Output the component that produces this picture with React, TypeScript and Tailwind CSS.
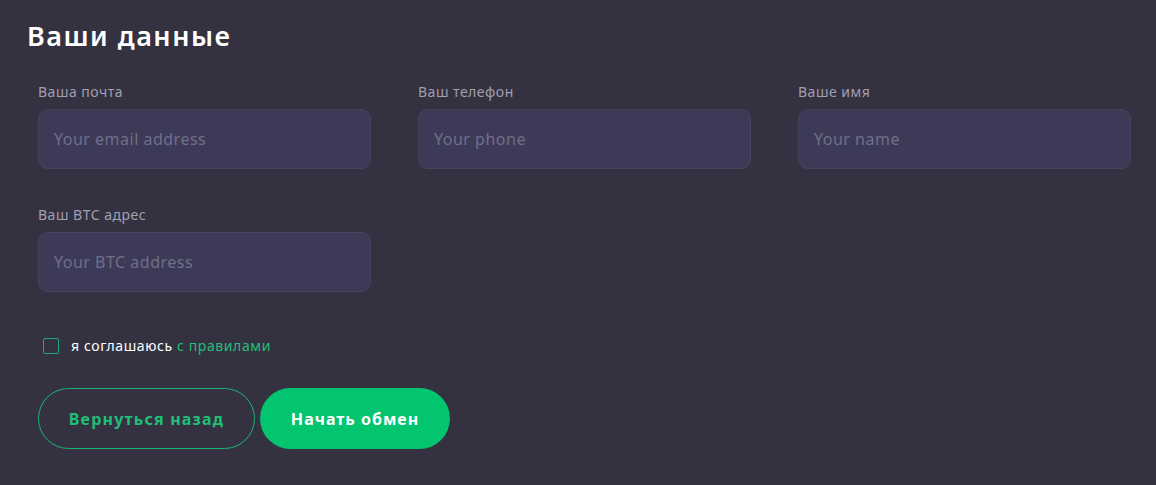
import React, { useState } from 'react';

const fields = [
  { label: 'Ваша почта', placeholder: 'Your email address' },
  { label: 'Ваш телефон', placeholder: 'Your phone' },
  { label: 'Ваше имя', placeholder: 'Your name' },
  { label: 'Ваш BTC адрес', placeholder: 'Your BTC address' },
];

/**
 * Single labelled input
 */
const Field: React.FC<{ label: string; placeholder: string }> = ({ label, placeholder }) => (
  <div className="flex flex-col">
    <label className="text-[14px] leading-[18px] tracking-[0.5px] text-[#a19fb0] mb-[8px] h-[18px]">{label}</label>
    <input
      placeholder={placeholder}
      className="h-[60px] w-[333px] rounded-[10px] bg-[#3d3a58] border border-[#47445f] px-[15px] text-[16px] tracking-[0.5px] text-white placeholder:text-[#716e88] outline-none"
    />
  </div>
);

const App: React.FC = () => {
  const [agree, setAgree] = useState(false);

  return (
    <div
      className="min-h-[485px] w-full bg-[#343241] pl-[27px] pt-[18px]"
      style={{ fontFamily: '"Noto Sans", "Open Sans", sans-serif' }}
    >
      <h2 className="text-[27px] leading-[36px] font-semibold tracking-[1.5px] text-white">Ваши данные</h2>

      <div className="pl-[11px] mt-[29px]">
        <div className="grid grid-cols-[333px_333px_333px] gap-x-[47px] gap-y-[37px]">
          {fields.map((f) => (
            <Field key={f.label} label={f.label} placeholder={f.placeholder} />
          ))}
        </div>

        <label className="flex items-center mt-[43px] ml-[5px] cursor-pointer">
          <input
            type="checkbox"
            checked={agree}
            onChange={() => setAgree(!agree)}
            className="appearance-none w-[16px] h-[16px] rounded-[2px] border border-[#1fa578] bg-transparent"
          />
          <span className="ml-[12px] text-[14px] tracking-[0.6px] text-white">
            я соглашаюсь <span className="text-[#25be7b]">с правилами</span>
          </span>
        </label>

        <div className="flex mt-[32px] gap-[5px]">
          <button className="h-[61px] w-[217px] rounded-full border border-[#19b473] text-[#1fbf78] text-[16px] font-bold tracking-[1.2px]">
            Вернуться назад
          </button>
          <button className="h-[61px] w-[190px] rounded-full bg-[#03c46f] text-white text-[16px] font-bold tracking-[1px]">
            Начать обмен
          </button>
        </div>
      </div>
    </div>
  );
};

export default App;
